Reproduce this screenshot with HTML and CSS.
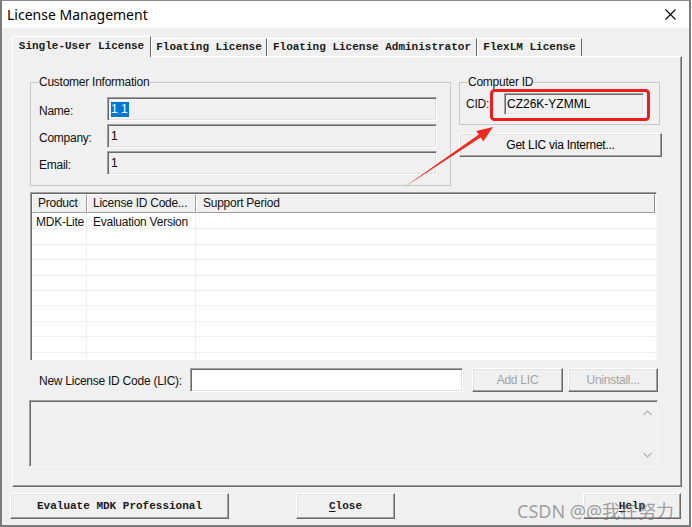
FILE: index.html
```html
<!DOCTYPE html>
<html>
<head>
<meta charset="utf-8">
<title>License Management</title>
<link rel="stylesheet" href="styles.css">
</head>
<body>
<div class="window">
  <div class="titlebar">
    <span class="title">License Management</span>
    <svg class="close" width="11" height="11" viewBox="0 0 11 11"><path d="M0.5 0.5 L10.5 10.5 M10.5 0.5 L0.5 10.5" stroke="#000" stroke-width="1.1" fill="none"/></svg>
  </div>
  <div class="client">
    <div class="tabs">
      <div class="tab active t1">Single-User License</div>
      <div class="tab t2">Floating License</div>
      <div class="tab t3">Floating License Administrator</div>
      <div class="tab t4">FlexLM License</div>
    </div>
    <div class="panel">
      <div class="top-row">
        <fieldset class="group customer">
          <legend>Customer Information</legend>
          <div class="form">
            <span class="lbl">Name:</span><div class="edit"><span class="sel">1 1</span></div>
            <span class="lbl">Company:</span><div class="edit">1</div>
            <span class="lbl">Email:</span><div class="edit">1</div>
          </div>
        </fieldset>
        <div class="right-col">
          <fieldset class="group computer">
            <legend>Computer ID</legend>
            <div class="cid-row">
              <span class="lbl">CID:</span><div class="edit cid">CZ26K-YZMML</div>
            </div>
          </fieldset>
          <button class="btn get-lic">Get LIC via Internet...</button>
        </div>
      </div>
      <div class="list">
        <div class="lv-head">
          <div class="hc c1">Product</div>
          <div class="hc c2">License ID Code...</div>
          <div class="hc c3">Support Period</div>
        </div>
        <div class="lv-row first"><div class="rc c1">MDK-Lite</div><div class="rc c2">Evaluation Version</div><div class="rc c3"></div></div>
        <div class="lv-row"><div class="rc c1"></div><div class="rc c2"></div><div class="rc c3"></div></div>
        <div class="lv-row"><div class="rc c1"></div><div class="rc c2"></div><div class="rc c3"></div></div>
        <div class="lv-row"><div class="rc c1"></div><div class="rc c2"></div><div class="rc c3"></div></div>
        <div class="lv-row"><div class="rc c1"></div><div class="rc c2"></div><div class="rc c3"></div></div>
        <div class="lv-row"><div class="rc c1"></div><div class="rc c2"></div><div class="rc c3"></div></div>
        <div class="lv-row"><div class="rc c1"></div><div class="rc c2"></div><div class="rc c3"></div></div>
        <div class="lv-row"><div class="rc c1"></div><div class="rc c2"></div><div class="rc c3"></div></div>
        <div class="lv-row"><div class="rc c1"></div><div class="rc c2"></div><div class="rc c3"></div></div>
        <div class="lv-row"><div class="rc c1"></div><div class="rc c2"></div><div class="rc c3"></div></div>
      </div>
      <div class="lic-row">
        <span class="lbl lic-lbl">New License ID Code (LIC):</span>
        <div class="edit white lic-input"></div>
        <button class="btn add" disabled>Add LIC</button>
        <button class="btn uninstall" disabled>Uninstall...</button>
      </div>
      <div class="memo">
        <div class="memo-body"></div>
        <div class="scroll">
          <svg width="9" height="6" viewBox="0 0 9 6"><path d="M0.5 5 L4.5 1 L8.5 5" stroke="#b4b4b4" stroke-width="1.2" fill="none"/></svg>
          <svg width="9" height="6" viewBox="0 0 9 6"><path d="M0.5 1 L4.5 5 L8.5 1" stroke="#b4b4b4" stroke-width="1.2" fill="none"/></svg>
        </div>
      </div>
    </div>
    <div class="bottom-row">
      <button class="btn mono eval">Evaluate MDK Professional</button>
      <button class="btn mono closebtn"><u>C</u>lose</button>
      <button class="btn mono help"><u>H</u>elp</button>
    </div>
  </div>

  <svg class="annot" width="692" height="527" viewBox="0 0 692 527">
    <rect x="491.5" y="90.5" width="157" height="29" rx="3" ry="3" fill="none" stroke="#f01c1c" stroke-width="3"/>
    <polygon points="403,188 480.6,137.4 483.4,141.2 493,127 476.2,131 478.8,134.6" fill="#ee2a22"/>
  </svg>
  <div class="watermark">CSDN @@我在努力</div>
</div>
</body>
</html>
```

FILE: styles.css
```css
* { box-sizing: border-box; }
html, body { margin: 0; padding: 0; background: #fff; }
body {
  font-family: "Liberation Sans", Arial, sans-serif;
  font-size: 12px;
  color: #000;
}

.window {
  position: relative;
  width: 691px;
  height: 527px;
  border: 2px solid #7b7b7b;
  border-top: 1px solid #8a8a8a;
  background: #f0f0f0;
  display: flex;
  flex-direction: column;
}

.titlebar {
  height: 27px;
  background: #fff;
  display: flex;
  align-items: center;
  justify-content: space-between;
  padding: 0 13px 0 5px;
}
.title {
  font-family: "Noto Sans", "Noto Sans CJK SC", sans-serif;
  font-size: 14px;
  color: #000;
}

.client {
  flex: 1;
  display: flex;
  flex-direction: column;
  padding: 8px 7px 0 10px;
}

/* tabs */
.tabs {
  display: flex;
  align-items: flex-end;
  height: 20px;
}
.tab {
  height: 18px;
  font: bold 11px "Liberation Mono", monospace;
  line-height: 16px;
  text-align: center;
  white-space: nowrap;
  color: #1a1a1a;
  border: 1px solid;
  border-bottom: 0;
  border-color: #fff #696969 transparent #fff;
}
.tab.active {
  height: 21px;
  line-height: 19px;
  margin-bottom: -1px;
  position: relative;
  z-index: 1;
  background: #f0f0f0;
}
.t1 { width: 139px; }
.t2 { width: 116px; }
.t3 { width: 210px; }
.t4 { width: 105px; }

/* panel */
.panel {
  height: 431px;
  border: 1px solid;
  border-color: #fff #696969 #696969 #fff;
  box-shadow: inset -1px -1px #a0a0a0;
  padding: 18px 0 0 17px;
}

.top-row {
  display: flex;
  gap: 8px;
  height: 111px;
}

.group {
  margin: 0;
  padding: 0;
  min-width: 0;
  border: 1px solid #c8c8c8;
}
.group legend {
  margin-left: 7px;
  padding: 0 1px;
  height: 14px;
  line-height: 14px;
  font-size: 12px;
  letter-spacing: -0.25px;
  color: #111;
}
.lbl {
  font-size: 12px;
  letter-spacing: -0.25px;
  color: #111;
  white-space: nowrap;
}

.customer {
  width: 421px;
  height: 111px;
}
.form {
  display: grid;
  grid-template-columns: 68px 330px;
  grid-auto-rows: 24px;
  row-gap: 3px;
  align-items: center;
  padding: 8px 0 0 8px;
}
.form .lbl { padding-top: 3px; }

.edit {
  height: 24px;
  border: 1px solid;
  border-color: #a0a0a0 #fff #fff #a0a0a0;
  box-shadow: inset 1px 1px #696969, inset -1px -1px #e3e3e3;
  background: #f0f0f0;
  padding: 0 3px;
  display: flex;
  align-items: center;
  font-size: 12px;
  color: #000;
}
.edit.white { background: #fff; }
.sel {
  background: #0078d7;
  color: #fff;
  line-height: 15px;
  padding: 0 1px 0 0;
}

.right-col {
  display: flex;
  flex-direction: column;
  align-items: flex-start;
}
.computer {
  width: 201px;
  height: 50px;
}
.cid-row {
  display: grid;
  grid-template-columns: 38px 140px;
  align-items: center;
  padding: 4px 0 0 6px;
}
.edit.cid {
  height: 22px;
  padding-left: 2px;
}

.btn {
  font: 12px "Liberation Sans", Arial, sans-serif;
  letter-spacing: -0.25px;
  background: #f0f0f0;
  color: #000;
  border: 1px solid;
  border-color: #fff #696969 #696969 #fff;
  box-shadow: inset -1px -1px #a0a0a0, inset 1px 1px #e3e3e3;
  padding: 0;
  margin: 0;
}
.btn:disabled { color: #a3a3a3; }
.btn.mono {
  font: bold 11px "Liberation Mono", monospace;
  letter-spacing: 0;
  color: #1a1a1a;
}
.get-lic {
  width: 203px;
  height: 24px;
  margin-top: 8px;
}

/* list view */
.list {
  width: 627px;
  height: 169px;
  margin-top: 6px;
  border: 1px solid;
  border-color: #a0a0a0 #f5f5f5 #f5f5f5 #a0a0a0;
  box-shadow: inset 1px 1px #696969;
  background: #fff;
  padding: 1px 1px 0 1px;
  overflow: hidden;
}
.lv-head {
  display: flex;
  height: 19px;
  background: #f0f0f0;
}
.hc {
  height: 19px;
  line-height: 17px;
  border: 1px solid;
  border-color: #fff #a0a0a0 #a0a0a0 #fff;
  font-size: 12px;
  letter-spacing: -0.25px;
  color: #111;
  white-space: nowrap;
}
.c1 { width: 55px; padding-left: 5px; }
.c2 { width: 109px; padding-left: 5px; }
.c3 { flex: 1; padding-left: 6px; }
.hc.c3 { border-right-color: #888; }

.lv-row {
  display: flex;
  height: 15.4px;
  border-bottom: 1px solid #efefef;
}
.lv-row.first { height: 16.4px; }
.rc {
  font-size: 12px;
  letter-spacing: -0.25px;
  line-height: 14px;
  padding-top: 2px;
  color: #111;
  border-right: 1px solid #efefef;
  white-space: nowrap;
}
.rc.c1 { padding-left: 4px; }
.rc.c2 { padding-left: 6px; }
.rc.c3 { border-right: 0; }

/* LIC row */
.lic-row {
  display: flex;
  align-items: center;
  height: 24px;
  margin-top: 7px;
  padding-left: 9px;
}
.lic-lbl { width: 151px; padding-top: 2px; }
.lic-input { width: 273px; }
.add {
  width: 91px;
  height: 24px;
  margin-left: 9px;
}
.uninstall {
  width: 90px;
  height: 24px;
  margin-left: 5px;
}

/* memo */
.memo {
  width: 629px;
  height: 67px;
  margin: 8px 0 0 -1px;
  border: 1px solid;
  border-color: #a0a0a0 #f8f8f8 #f8f8f8 #a0a0a0;
  box-shadow: inset 1px 1px #696969;
  background: #f0f0f0;
  display: flex;
}
.memo-body { flex: 1; }
.scroll {
  width: 17px;
  display: flex;
  flex-direction: column;
  justify-content: space-between;
  align-items: center;
  padding: 9px 0 8px 0;
  margin-right: 1px;
}

/* bottom buttons */
.bottom-row {
  display: flex;
  margin: 6px 1px 0 -2px;
  height: 26px;
}
.eval { width: 219px; height: 26px; }
.closebtn { width: 99px; height: 26px; margin-left: 67px; }
.help { width: 98px; height: 26px; margin-left: auto; }
.btn u { text-decoration: underline; text-underline-offset: 2px; }

/* annotation overlays */
.annot {
  position: absolute;
  left: -2px;
  top: -1px;
  pointer-events: none;
}
.watermark {
  position: absolute;
  left: 515px;
  top: 496px;
  font-family: "Noto Sans", "Noto Sans CJK SC", sans-serif;
  font-size: 18px;
  color: rgba(105, 105, 105, 0.62);
  white-space: nowrap;
  letter-spacing: 0;
}
```
